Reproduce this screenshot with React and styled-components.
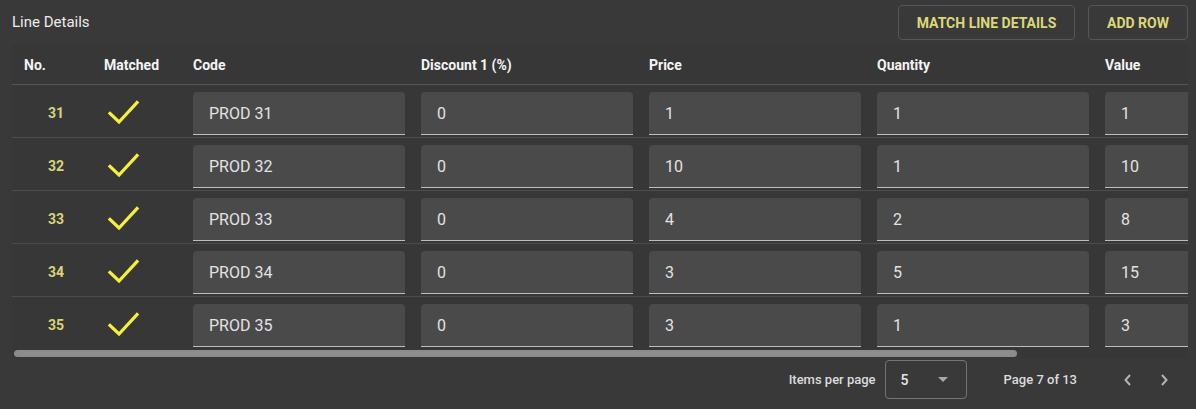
import styled, { createGlobalStyle } from "styled-components";

const GlobalStyle = createGlobalStyle`
  html, body {
    margin: 0;
    padding: 0;
    background: #393939;
  }
  body {
    font-family: Roboto, "Noto Sans", sans-serif;
    color: #e6e6e6;
  }
`;

const rows = [
  { no: 31, code: "PROD 31", discount: 0, price: 1, quantity: 1, value: 1 },
  { no: 32, code: "PROD 32", discount: 0, price: 10, quantity: 1, value: 10 },
  { no: 33, code: "PROD 33", discount: 0, price: 4, quantity: 2, value: 8 },
  { no: 34, code: "PROD 34", discount: 0, price: 3, quantity: 5, value: 15 },
  { no: 35, code: "PROD 35", discount: 0, price: 3, quantity: 1, value: 3 },
];

const columns = "84px 89px repeat(5, 228px) 66px";
const viewWidth = 1176;
const contentWidth = 1376;

const CheckIcon = () => (
  <svg width="34" height="26" viewBox="0 0 34 26">
    <polyline
      points="4,14.5 13,23 31,3.5"
      fill="none"
      stroke="#f5f03a"
      strokeWidth="3.2"
      strokeLinecap="square"
    />
  </svg>
);

const Chevron = ({ dir }) => (
  <svg width="10" height="14" viewBox="0 0 10 14">
    <polyline
      points={dir === "left" ? "7,2 2.5,7 7,12" : "3,2 7.5,7 3,12"}
      fill="none"
      stroke="#b4b4b4"
      strokeWidth="2"
    />
  </svg>
);

const LineDetails = () => {
  const thumb = Math.round(((viewWidth - 2) * viewWidth) / contentWidth);
  return (
    <Page>
      <TopBar>
        <Title>Line Details</Title>
        <Actions>
          <OutlineButton>MATCH LINE DETAILS</OutlineButton>
          <OutlineButton $width="100px">ADD ROW</OutlineButton>
        </Actions>
      </TopBar>

      <TableScroll>
        <Table>
          <HeaderRow>
            <HeaderCell>No.</HeaderCell>
            <HeaderCell>Matched</HeaderCell>
            <HeaderCell>Code</HeaderCell>
            <HeaderCell>Discount 1 (%)</HeaderCell>
            <HeaderCell>Price</HeaderCell>
            <HeaderCell>Quantity</HeaderCell>
            <HeaderCell>Value</HeaderCell>
            <HeaderCell />
          </HeaderRow>
          {rows.map((r, i) => (
            <BodyRow key={r.no} $last={i === rows.length - 1}>
              <NumberCell>{r.no}</NumberCell>
              <MatchedCell>
                <CheckIcon />
              </MatchedCell>
              <FieldCell>
                <Field>{r.code}</Field>
              </FieldCell>
              <FieldCell>
                <Field>{r.discount}</Field>
              </FieldCell>
              <FieldCell>
                <Field>{r.price}</Field>
              </FieldCell>
              <FieldCell>
                <Field>{r.quantity}</Field>
              </FieldCell>
              <FieldCell>
                <Field>{r.value}</Field>
              </FieldCell>
              <FieldCell />
            </BodyRow>
          ))}
        </Table>
      </TableScroll>
      <ScrollTrack>
        <ScrollThumb style={{ width: thumb }} />
      </ScrollTrack>

      <Paginator>
        <PagerLabel>Items per page</PagerLabel>
        <PageSelect>
          <span>5</span>
          <SelectArrow />
        </PageSelect>
        <PageRange>Page 7 of 13</PageRange>
        <PagerButtons>
          <IconButton>
            <Chevron dir="left" />
          </IconButton>
          <IconButton>
            <Chevron dir="right" />
          </IconButton>
        </PagerButtons>
      </Paginator>
    </Page>
  );
};

const Page = styled.div`
  width: 1196px;
  height: 409px;
  box-sizing: border-box;
  padding: 0 8px 0 12px;
  overflow: hidden;
`;

const TopBar = styled.div`
  height: 45px;
  display: flex;
  align-items: center;
  justify-content: space-between;
`;

const Title = styled.div`
  font-size: 15px;
  color: #ececec;
  margin-top: -2px;
`;

const Actions = styled.div`
  display: flex;
  gap: 13px;
`;

const OutlineButton = styled.button`
  width: ${(p) => p.$width || "177px"};
  height: 35px;
  box-sizing: border-box;
  border: 1px solid #565656;
  border-radius: 4px;
  background: transparent;
  color: #dcd77a;
  font-family: Roboto, sans-serif;
  font-weight: 700;
  font-size: 14px;
  padding: 0;
  cursor: pointer;
`;

const TableScroll = styled.div`
  width: ${viewWidth}px;
  overflow: hidden;
  background: #373737;
`;

const Table = styled.div`
  width: ${contentWidth}px;
`;

const ScrollTrack = styled.div`
  width: ${viewWidth}px;
  height: 9px;
  background: #373737;
  padding: 1px 0 0 2px;
  box-sizing: border-box;
`;

const ScrollThumb = styled.div`
  height: 7px;
  background: #8c8c8c;
  border-radius: 4px;
`;

const HeaderRow = styled.div`
  display: grid;
  grid-template-columns: ${columns};
  height: 39px;
  border-bottom: 1px solid #555;
  align-items: center;
`;

const HeaderCell = styled.div`
  font-size: 14px;
  font-weight: 700;
  color: #f4f4f4;
  padding-left: 12px;
  &:nth-child(n + 2) {
    padding-left: 8px;
  }
`;

const BodyRow = styled.div`
  display: grid;
  grid-template-columns: ${columns};
  height: 52px;
  border-bottom: ${(p) => (p.$last ? "none" : "1px solid #4d4d4d")};
`;

const NumberCell = styled.div`
  display: flex;
  align-items: center;
  justify-content: center;
  padding: 4px 8px 0 12px;
  font-size: 14px;
  font-weight: 700;
  color: #d8d47a;
`;

const MatchedCell = styled.div`
  display: flex;
  align-items: center;
  padding: 1px 0 0 10px;
`;

const FieldCell = styled.div`
  padding: 7px 8px 0;
`;

const Field = styled.div`
  height: 43px;
  box-sizing: border-box;
  background: #4a4a4a;
  border-radius: 4px 4px 0 0;
  border-bottom: 1px solid #bdbdbd;
  padding: 0 16px;
  display: flex;
  align-items: center;
  font-size: 16px;
  color: #e2e2e2;
`;

const Paginator = styled.div`
  height: 43px;
  display: flex;
  align-items: center;
  justify-content: flex-end;
  padding: 0 6px 0 0;
`;

const PagerLabel = styled.div`
  font-size: 13px;
  font-weight: 500;
  color: #dcdcdc;
  margin-right: 9px;
`;

const PageSelect = styled.div`
  width: 82px;
  height: 39px;
  box-sizing: border-box;
  border: 1px solid #747474;
  border-radius: 4px;
  display: flex;
  align-items: center;
  justify-content: space-between;
  padding: 0 18px 0 15px;
  font-size: 14px;
  font-weight: 500;
  color: #e6e6e6;
`;

const SelectArrow = styled.span`
  width: 0;
  height: 0;
  border-left: 5px solid transparent;
  border-right: 5px solid transparent;
  border-top: 5px solid #a8a8a8;
`;

const PageRange = styled.div`
  font-size: 13px;
  font-weight: 500;
  color: #dcdcdc;
  margin-left: 37px;
  margin-right: 33px;
`;

const PagerButtons = styled.div`
  display: flex;
`;

const IconButton = styled.button`
  width: 36px;
  height: 36px;
  border: none;
  background: transparent;
  display: flex;
  align-items: center;
  justify-content: center;
  padding: 0;
`;

export default function App() {
  return (
    <>
      <GlobalStyle />
      <LineDetails />
    </>
  );
}
